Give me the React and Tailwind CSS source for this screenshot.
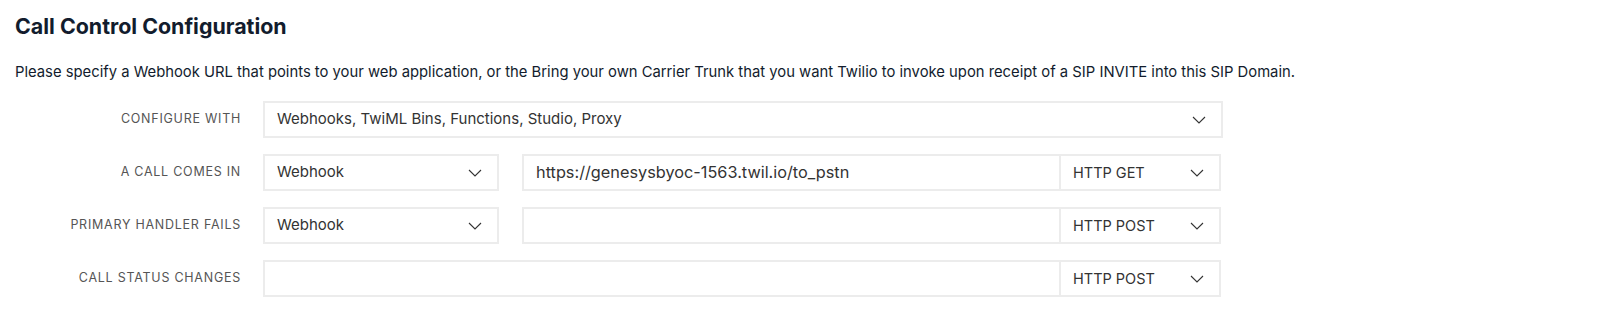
import React from 'react';

const Chevron = () => (
  <svg className="w-[14px] h-[8px] text-[#333]" viewBox="0 0 14 8" fill="none" stroke="currentColor" strokeWidth={1.1}>
    <path d="M1 1l6 6 6-6" />
  </svg>
);

const Select = ({ value, className = '', textClass = 'text-[15px]' }) => (
  <div className={`h-[37px] flex items-center justify-between pl-3 pr-[15px] bg-white border-2 border-[#ececec] text-[#333] ${textClass} ${className}`}>
    <span>{value}</span>
    <Chevron />
  </div>
);

const Input = ({ value = '', className = '' }) => (
  <div className={`h-[37px] flex items-center px-3 bg-white border-2 border-[#ececec] text-[16.3px] text-[#333] ${className}`}>
    {value}
  </div>
);

const Row = ({ label, children }) => (
  <div className="flex items-center">
    <div className="w-[226px] text-right text-[12.5px] tracking-[0.06em] text-[#555] uppercase">{label}</div>
    <div className="ml-[22px] flex items-center">{children}</div>
  </div>
);

const App = () => {
  return (
    <div className="min-h-screen bg-white px-[15px] pt-[11px] font-['Inter',sans-serif]">
      <h2 className="text-[21.4px] leading-[30px] font-bold text-[#121c2d]">Call Control Configuration</h2>
      <p className="mt-[21px] text-[14.8px] leading-[20px] text-[#121c2d]">
        Please specify a Webhook URL that points to your web application, or the Bring your own Carrier Trunk that you want Twilio to invoke upon receipt of a SIP INVITE into this SIP Domain.
      </p>

      <div className="mt-[19px] flex flex-col gap-[16px]">
        <Row label="Configure with">
          <Select value="Webhooks, TwiML Bins, Functions, Studio, Proxy" className="w-[960px]" />
        </Row>
        <Row label="A call comes in">
          <Select value="Webhook" className="w-[236px]" />
          <Input value="https://genesysbyoc-1563.twil.io/to_pstn" className="ml-[23px] w-[539px]" />
          <Select value="HTTP GET" textClass="text-[14.5px]" className="w-[162px] -ml-[2px]" />
        </Row>
        <Row label="Primary handler fails">
          <Select value="Webhook" className="w-[236px]" />
          <Input className="ml-[23px] w-[539px]" />
          <Select value="HTTP POST" textClass="text-[14.5px]" className="w-[162px] -ml-[2px]" />
        </Row>
        <Row label="Call status changes">
          <Input className="w-[798px]" />
          <Select value="HTTP POST" textClass="text-[14.5px]" className="w-[162px] -ml-[2px]" />
        </Row>
      </div>
    </div>
  );
};

export default App;
